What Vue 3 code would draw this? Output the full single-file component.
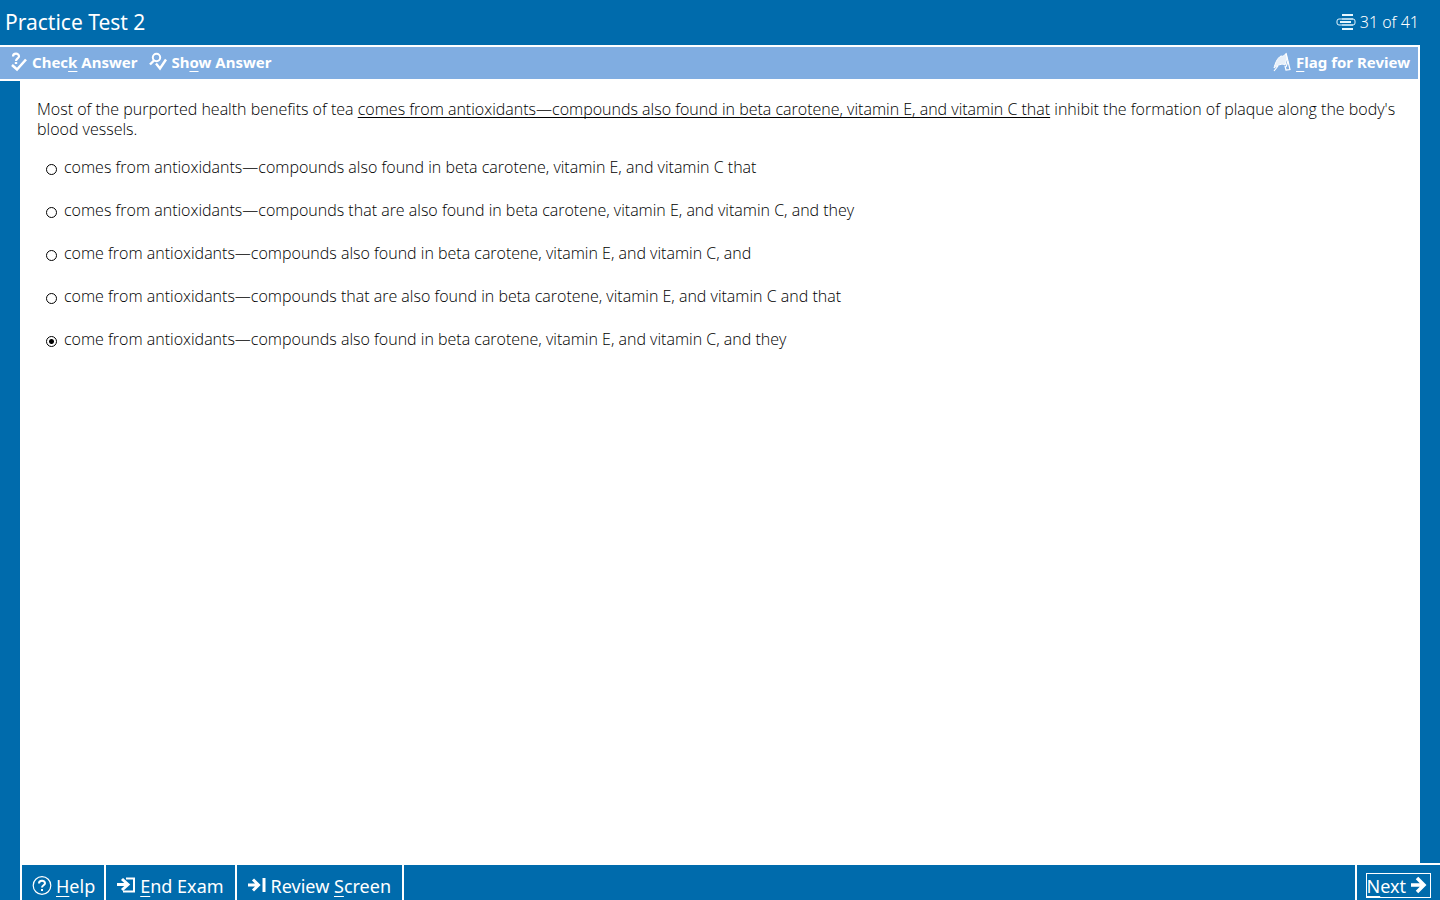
<template>
    <div class="exam">
        <header class="title_bar">
            <h1>{{ title }}</h1>
            <div class="progress">
                <svg width="20" height="16" viewBox="0 0 20 16" fill="none" stroke="#e6f7ff">
                    <path d="M6 1h11M6 15h11" stroke-width="2" />
                    <rect x="1" y="5" width="18" height="6" rx="2" stroke-width="1" />
                    <path d="M4 8h11" stroke-width="2" />
                    <path d="M6 5h11M6 11h11" stroke-width="1" />
                </svg>
                <span>{{ current }} of {{ total }}</span>
            </div>
        </header>

        <div class="tool_bar">
            <button type="button" class="tool">
                <svg width="18" height="20" viewBox="0 0 18 20" fill="none" stroke="#fff">
                    <path d="M3 4.5C3 .8 9 .8 9 4.2C9 6.5 6 6.4 6 9" stroke-width="2.2" />
                    <path d="M4.8 11h2.4" stroke-width="2" />
                    <path d="M2 13L7 17.5L16 7.5" stroke-width="2.6" />
                </svg>
                <span>Chec<u>k</u> Answer</span>
            </button>
            <button type="button" class="tool">
                <svg width="18" height="20" viewBox="0 0 18 20" fill="none" stroke="#fff">
                    <circle cx="7.5" cy="5.5" r="3.7" stroke-width="2" />
                    <path d="M5 8.5L1 12.5" stroke-width="2.4" />
                    <path d="M7 11.5L11 16.5L17 7.5" stroke-width="2.4" />
                </svg>
                <span>Sh<u>o</u>w Answer</span>
            </button>
            <button type="button" class="tool flag">
                <svg width="20" height="20" viewBox="0 0 20 20" fill="none" stroke="#fff">
                    <path d="M2 16C3 12 5 6 9 4C11 5 12 3 14 2L15 6L13 13C10 11 6 13 2 16Z" fill="#fff" fill-opacity=".8" />
                    <path d="M14 1L18 17.5L14 18L13 14" stroke-width="1.2" />
                    <path d="M2 19L6 14M16 9l-2 6" stroke-width="1.2" />
                </svg>
                <span><u>F</u>lag for Review</span>
            </button>
        </div>

        <main class="question">
            <p id="stem">Most of the purported health benefits of tea <u>comes from antioxidants—compounds also found in beta carotene, vitamin E, and vitamin C that</u> inhibit the formation of plaque along the body's blood vessels.</p>
            <ul role="radiogroup" aria-labelledby="stem">
                <li v-for="(choice, index) in choices" :key="index">
                    <label>
                        <input type="radio" name="answer" :value="index" v-model="selected">
                        <span>{{ choice }}</span>
                    </label>
                </li>
            </ul>
        </main>

        <footer class="nav_bar">
            <button type="button" class="nav">
                <svg width="20" height="20" viewBox="0 0 20 20" fill="none" stroke="#fff">
                    <circle cx="10" cy="9.5" r="8.8" stroke-width="1.2" />
                    <path d="M7 7.5C7 4 13 4 13 7.2C13 9.3 10 9.2 10 11.5" stroke-width="2" />
                    <path d="M9 14h2" stroke-width="2" />
                </svg>
                <span><u>H</u>elp</span>
            </button>
            <button type="button" class="nav">
                <svg width="20" height="20" viewBox="0 0 20 20" fill="none" stroke="#fff">
                    <path d="M1 8.5h11M6 3l6 5.5l-6 5.5" stroke-width="3" />
                    <path d="M10 2.5h8v13H7" stroke-width="2" />
                </svg>
                <span><u>E</u>nd Exam</span>
            </button>
            <button type="button" class="nav">
                <svg width="20" height="20" viewBox="0 0 20 20" fill="none" stroke="#fff">
                    <path d="M1 9h10M6 3.5l5.500 5.500l-5.500 5.500" stroke-width="3" />
                    <path d="M17 2v14" stroke-width="3" />
                </svg>
                <span>Review <u>S</u>creen</span>
            </button>
            <div class="next_cell">
                <button type="button" class="next">
                    <span><u>N</u>ext</span>
                    <svg width="20" height="20" viewBox="0 0 20 20" fill="none" stroke="#fff">
                        <path d="M1 9h13M7 2l7 7l-7 7" stroke-width="3.5" />
                    </svg>
                </button>
            </div>
        </footer>
    </div>
</template>

<script setup>
import { ref } from 'vue';

const title = 'Practice Test 2';
const current = ref(31);
const total = 41;

// answer choices
const choices = [
    'comes from antioxidants—compounds also found in beta carotene, vitamin E, and vitamin C that',
    'comes from antioxidants—compounds that are also found in beta carotene, vitamin E, and vitamin C, and they',
    'come from antioxidants—compounds also found in beta carotene, vitamin E, and vitamin C, and',
    'come from antioxidants—compounds that are also found in beta carotene, vitamin E, and vitamin C and that',
    'come from antioxidants—compounds also found in beta carotene, vitamin E, and vitamin C, and they',
];
const selected = ref(4);
</script>

<style>
body {
    margin: 0;
    background: #006bac;
}
</style>

<style scoped>
.exam {
    display: flex;
    flex-direction: column;
    min-height: 100vh;
    background: #006bac;
    color: #fff;
    font-family: Tahoma, "Noto Sans", sans-serif;
}

svg {
    flex: none;
}

button {
    display: flex;
    align-items: center;
    padding: 0;
    border: 0;
    background: none;
    color: inherit;
    font-family: inherit;
    cursor: pointer;
}

button u {
    text-decoration-thickness: 1px;
    text-underline-offset: 3px;
    text-decoration-skip-ink: none;
}

/* header */
.title_bar {
    display: flex;
    align-items: center;
    justify-content: space-between;
    box-sizing: border-box;
    height: 45px;
    padding: 0 21px 2px 5px;
}

.title_bar h1 {
    margin: 0;
    font-size: 21px;
    font-weight: 400;
}

.progress {
    display: flex;
    align-items: center;
    gap: 4px;
    font-size: 16px;
    font-weight: 300;
}

.tool_bar {
    display: flex;
    align-items: center;
    gap: 12px;
    box-sizing: border-box;
    height: 36px;
    margin-right: 20px;
    padding: 0 8px 2px 10px;
    border: solid #fff;
    border-width: 2px 2px 2px 0;
    background: #80ade1;
}

.tool {
    gap: 4px;
    font-size: 15px;
    font-weight: 700;
}

.tool.flag {
    margin-left: auto;
}

/* question */
.question {
    flex: 1;
    margin: 0 20px;
    padding: 18px 17px;
    background: #fff;
    color: #000;
    font-family: Tahoma, "Open Sans", sans-serif;
    font-size: 16px;
    font-weight: 300;
    line-height: 20px;
}

.question p {
    margin: 0;
}

.question u {
    text-decoration-thickness: 1px;
    text-underline-offset: 2px;
    text-decoration-skip-ink: none;
}

.question ul {
    display: flex;
    flex-direction: column;
    gap: 23px;
    margin: 18px 0 0;
    padding: 0 0 0 9px;
    list-style: none;
}

.question label {
    display: flex;
    align-items: center;
    gap: 7px;
}

.question input {
    appearance: none;
    flex: none;
    width: 11px;
    height: 11px;
    margin: 4px 0 0;
    border: 1px solid #000;
    border-radius: 50%;
    background: #fff;
}

.question input:checked {
    background: radial-gradient(circle, #000 0 2px, #fff 3px);
}

/* footer */
.nav_bar {
    display: flex;
    height: 35px;
    margin-left: 20px;
    border-top: 2px solid #fff;
    border-left: 2px solid #fff;
}

.nav {
    gap: 4px;
    padding: 6px 11px 0 10px;
    border-right: 2px solid #fff;
    font-size: 18px;
}

.nav:first-child {
    padding-right: 9px;
}

.next_cell {
    display: flex;
    align-items: center;
    margin-left: auto;
    padding: 6px 9px 0;
    border-left: 2px solid #fff;
}

.next {
    gap: 4px;
    height: 25px;
    border: 1px solid #fff;
    font-size: 18px;
}
</style>
